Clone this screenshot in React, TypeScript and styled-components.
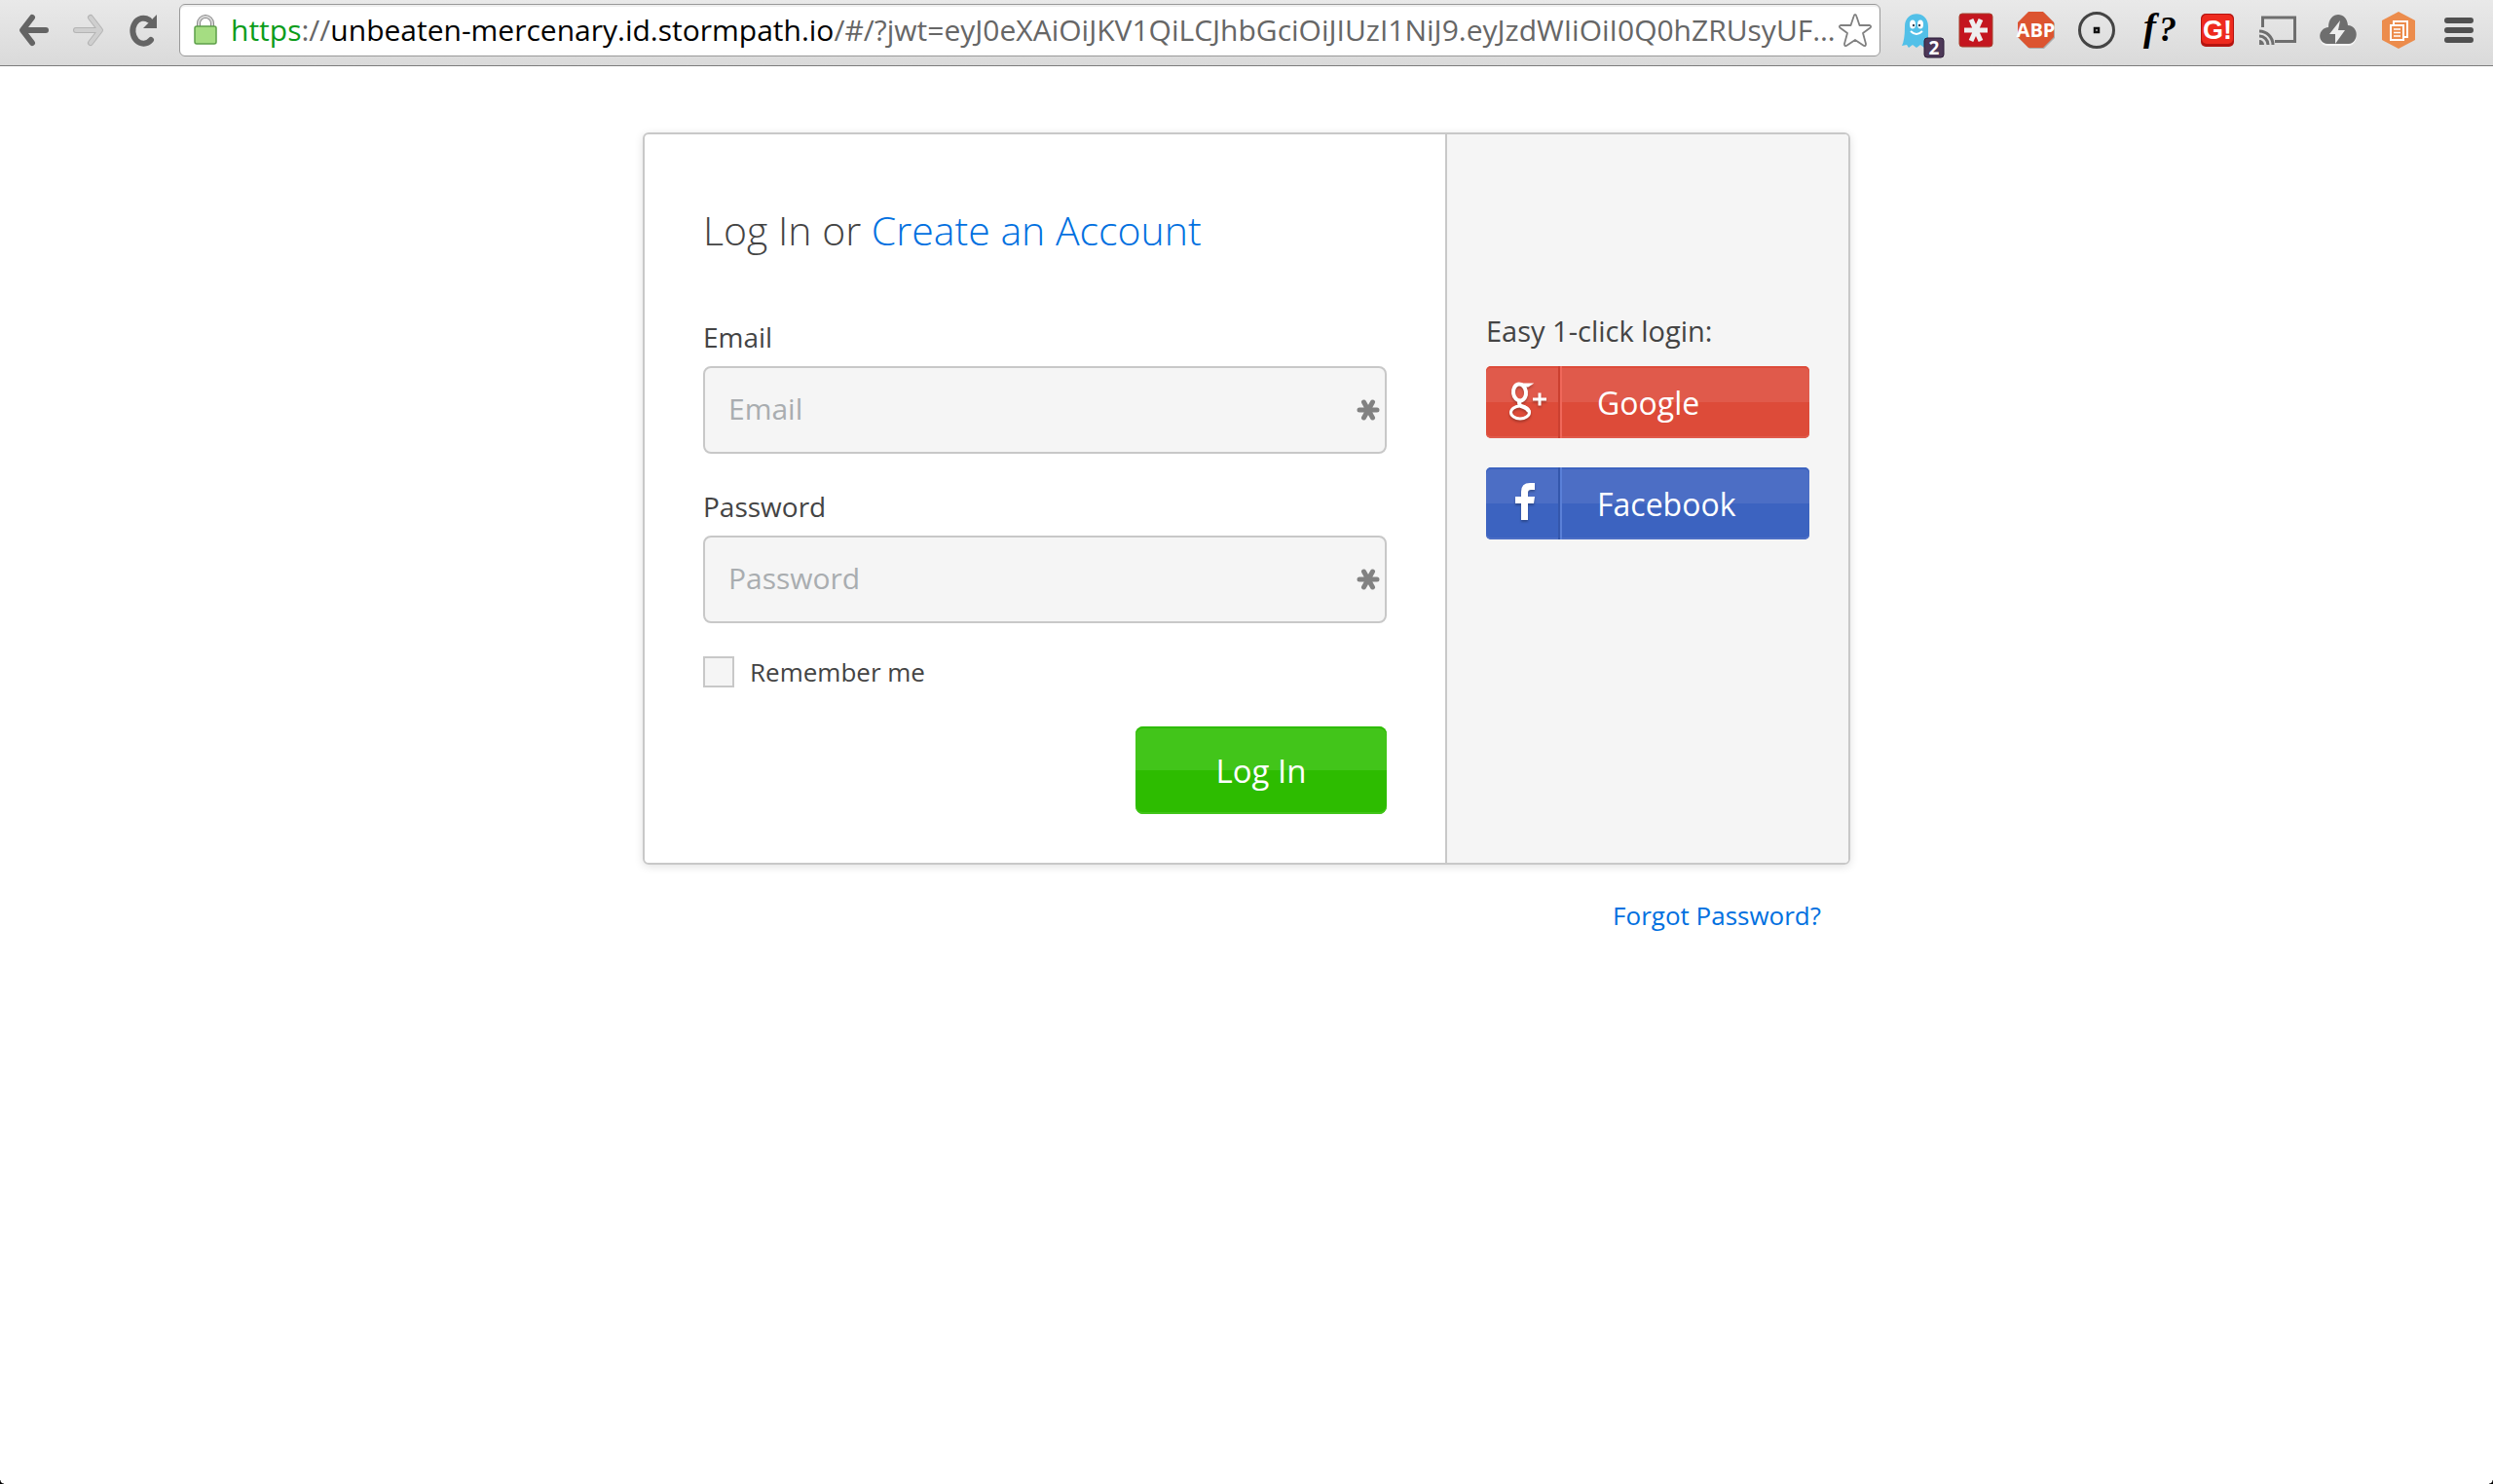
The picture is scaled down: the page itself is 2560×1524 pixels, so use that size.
import React from "react";
import styled, { createGlobalStyle } from "styled-components";

const sans = '"Open Sans", "Noto Sans", sans-serif';

const Global = createGlobalStyle`
  * { box-sizing: border-box; }
  body { margin: 0; background: #fff; color: #444; font-family: ${sans}; }
  button, input { font-family: inherit; }
`;

const Toolbar = styled.header`
  display: flex;
  align-items: center;
  height: 68px;
  padding: 0 16px 5px;
  background: linear-gradient(#e9e9e9, #dadada);
  border-bottom: 1px solid #7c7c7c;
`;

const Group = styled.div<{ $gap: number }>`
  display: flex;
  align-items: center;
  gap: ${(p) => p.$gap}px;
  flex: none;
`;

const IconButton = styled.button`
  display: flex;
  align-items: center;
  justify-content: center;
  width: 38px;
  height: 60px;
  padding: 0;
  border: 0;
  background: none;
  svg { display: block; overflow: visible; flex: none; }
`;

const Omnibox = styled.div`
  display: flex;
  align-items: center;
  flex: 1;
  min-width: 0;
  height: 54px;
  margin: 0 17px 0 18px;
  padding: 0 7px 0 14px;
  background: #fff;
  border: 1px solid #999;
  border-radius: 6px;
  box-shadow: inset 0 2px 1px #eee;
  svg { flex: none; }
`;

const Address = styled.div`
  flex: 1;
  min-width: 0;
  padding-left: 14px;
  overflow: hidden;
  white-space: nowrap;
  font-size: 30px;
  line-height: 44px;
  color: #666;
`;

const Scheme = styled.span`color: #0b9c1a;`;
const Host = styled.span`color: #000;`;

const Main = styled.main`
  width: 1240px;
  max-width: 100%;
  margin: 68px auto 0;
`;

const Card = styled.section`
  display: flex;
  border: 2px solid #c8c8c8;
  border-radius: 6px;
  overflow: hidden;
  box-shadow: 0 2px 10px rgba(0, 0, 0, 0.12);
`;

const LoginForm = styled.form`
  flex: 1;
  padding: 70px 60px 50px;
`;

const Title = styled.h1`
  margin: 0 0 62px;
  font-size: 41px;
  line-height: 56px;
  font-weight: 300;
`;

const Link = styled.a`
  color: #0070e0;
  text-decoration: none;
`;

const Field = styled.div`
  margin-bottom: 34px;
`;

const Label = styled.label`
  display: block;
  padding-bottom: 10px;
  font-size: 28px;
  line-height: 40px;
`;

const InputBox = styled.div`
  display: flex;
  align-items: center;
  height: 90px;
  padding-right: 5px;
  background: #f5f5f5;
  border: 2px solid #c8c8c8;
  border-radius: 8px;
  svg { flex: none; }
`;

const TextInput = styled.input`
  flex: 1;
  min-width: 0;
  height: 100%;
  padding: 0 24px 3px;
  border: 0;
  outline: 0;
  background: none;
  font-size: 30px;
  color: #444;
  &::placeholder { color: #a9adb0; opacity: 1; }
`;

const Remember = styled.label`
  display: flex;
  align-items: center;
  gap: 16px;
  font-size: 26px;
  line-height: 32px;
`;

const Checkbox = styled.input`
  appearance: none;
  width: 32px;
  height: 32px;
  margin: 0;
  background: #f5f5f5;
  border: 2px solid #c8c8c8;
`;

const glossy = (top: string, bottom: string) => `
  background: linear-gradient(${top} 50%, ${bottom} 50%);
  box-shadow: inset 0 2px ${bottom}, inset 0 -2px ${top};
  color: #fff;
  border: 0;
  font-weight: 500;
`;

const Submit = styled.button`
  display: block;
  width: 258px;
  height: 90px;
  margin: 40px 0 0 auto;
  border-radius: 8px;
  font-size: 33px;
  ${glossy("#42c51a", "#2dbc00")}
`;

const Social = styled.aside`
  flex: none;
  width: 414px;
  padding: 180px 40px 0;
  background: #f5f5f5;
  border-left: 2px solid #c8c8c8;
`;

const SocialLabel = styled.p`
  margin: 0 0 14px;
  font-size: 29px;
  line-height: 44px;
`;

const SocialButton = styled.button<{ $top: string; $bottom: string; $dark: string; $light: string }>`
  display: flex;
  align-items: center;
  width: 100%;
  height: 74px;
  margin-bottom: 30px;
  padding: 0;
  border-radius: 5px;
  font-size: 32px;
  ${(p) => glossy(p.$top, p.$bottom)}
  svg {
    display: block;
    width: 74px;
    height: 74px;
    filter: drop-shadow(0 2px 1px rgba(0, 0, 0, 0.25));
  }
  span {
    align-self: stretch;
    padding-left: 36px;
    line-height: 76px;
    border-left: 2px solid ${(p) => p.$light};
    box-shadow: -2px 0 ${(p) => p.$dark};
    margin-left: 2px;
  }
`;

const Below = styled.div`
  padding: 34px 30px 0;
  text-align: right;
  font-size: 26px;
  line-height: 36px;
`;

const WindowCorner = styled.div<{ $side: "left" | "right" }>`
  position: fixed;
  bottom: 0;
  ${(p) => p.$side}: 0;
  width: 4px;
  height: 4px;
  background: radial-gradient(circle at ${(p) => (p.$side === "left" ? "right" : "left")} top, transparent 3px, #000 4px);
`;

const Asterisk = () => (
  <svg width="24" height="24" viewBox="0 0 24 24" stroke="#828282" strokeWidth="5" strokeLinecap="round" aria-hidden="true">
    <path d="M3 12H21M7.500 4L16.500 20M16.500 4L7.500 20" />
  </svg>
);

const Back = () => (
  <svg width="32" height="34" viewBox="0 0 32 34" fill="none" stroke="#646464" strokeWidth="6" strokeLinecap="round" strokeLinejoin="round">
    <path d="M28 17H6M14 4L4 17L14 30" />
  </svg>
);

const Forward = () => (
  <svg width="32" height="34" viewBox="0 0 32 34" fill="none" strokeLinecap="round" strokeLinejoin="round">
    <path d="M3 17H26M18 4L28 17L18 30" stroke="#b4b4b4" strokeWidth="6" />
    <path d="M3 17H26M18 4L28 17L18 30" stroke="#cfcfcf" strokeWidth="4" />
  </svg>
);

const Reload = () => (
  <svg width="28" height="34" viewBox="0 0 28 34" fill="none">
    <path d="M22 27A11 13 0 1 1 20 6.500" stroke="#646464" strokeWidth="6" strokeLinecap="round" />
    <path d="M28 1V15H14Z" fill="#646464" />
  </svg>
);

const Lock = () => (
  <svg width="24" height="32" viewBox="0 0 24 32">
    <path d="M5 14V9a7 7 0 0 1 14 0v5" fill="none" stroke="#8a8a8a" strokeWidth="4" />
    <path d="M5 14V9a7 7 0 0 1 14 0v5" fill="none" stroke="#d8d8d8" strokeWidth="2" />
    <rect x="1" y="12" width="22" height="18" rx="2" fill="#a5dd82" stroke="#5ea04a" strokeWidth="1.500" />
  </svg>
);

const Star = () => (
  <svg width="36" height="36" viewBox="0 0 36 36" fill="#fff" stroke="#808080" strokeWidth="1.800" strokeLinejoin="round">
    <path d="M18 2Q19 2 19.500 4L22.500 13H33Q35 14 33.500 15.500L26 21L29 32Q29 34.500 27 34L18 28L9 34Q7 34.500 7 32L10 21L2.500 15.500Q1 14 3 13H13.500L16.500 4Q17 2 18 2Z" />
  </svg>
);

const Ghost = () => (
  <svg width="28" height="34" viewBox="0 0 28 34">
    <path d="M3 13C3 -4 27 -4 27 13V31L23 35L19 32L15 35L11 32L7 35L5 32L0 33Q3 27 3 13Z" fill="#52c0e8" />
    <ellipse cx="11" cy="11" rx="3" ry="4.500" fill="#fff" /><ellipse cx="19" cy="11" rx="3" ry="4.500" fill="#fff" />
    <circle cx="12" cy="12" r="1.200" fill="#345" /><circle cx="18" cy="12" r="1.200" fill="#345" />
    <path d="M9 18Q15 24 21 18" fill="none" stroke="#fff" strokeWidth="2" />
    <rect x="23" y="25" width="20" height="20" rx="3" fill="#4d3858" stroke="#2b1a36" />
    <text x="33" y="42" fill="#fff" fontSize="19" fontWeight="700" textAnchor="middle" fontFamily="Open Sans">2</text>
  </svg>
);

const Pass = () => (
  <svg width="36" height="36" viewBox="0 0 36 36">
    <rect x="1" y="1" width="34" height="34" rx="3" fill="#c4161f" stroke="#a4402c" />
    <path d="M6 18H30M13 7L23 29M23 7L13 29" stroke="#eee" strokeWidth="5" />
  </svg>
);

const Abp = () => (
  <svg width="38" height="38" viewBox="0 0 38 38">
    <path d="M12 1H27L38 12V27L27 38H12L1 27V12Z" fill="#aaa" />
    <path d="M11 0H26L37 11V26L26 37H11L0 26V11Z" fill="#dc5430" />
    <text x="18.500" y="26" fill="#fff" fontSize="20" fontWeight="700" textAnchor="middle" fontFamily="Liberation Sans Narrow, Open Sans">ABP</text>
  </svg>
);

const Target = () => (
  <svg width="38" height="38" viewBox="0 0 38 38" fill="none">
    <circle cx="19" cy="19" r="17.500" stroke="#444" strokeWidth="3" />
    <rect x="17" y="17" width="4" height="4" stroke="#111" strokeWidth="2.500" />
  </svg>
);

const FQuestion = () => (
  <svg width="38" height="38" viewBox="0 0 38 38">
    <text x="5" y="29" fontSize="39" fontWeight="700" fontStyle="italic" fontFamily="Liberation Serif">f</text>
    <text x="21" y="30" fontSize="36" fontWeight="700" fontStyle="italic" fontFamily="Liberation Serif">?</text>
  </svg>
);

const GBang = () => (
  <svg width="34" height="34" viewBox="0 0 34 34">
    <rect width="34" height="34" rx="5" fill="#b51410" />
    <rect x="1" y="1" width="32" height="30" rx="5" fill="#ee2a1e" />
    <text x="17" y="26" fill="#fff" fontSize="27" fontWeight="700" textAnchor="middle" fontFamily="Liberation Sans">G!</text>
  </svg>
);

const Cast = () => (
  <svg width="38" height="30" viewBox="0 0 38 30" fill="none" stroke="#6e6e6e" strokeWidth="3">
    <path d="M3.500 12V2H36.500V26.500H16" />
    <path d="M0 16A14 14 0 0 1 14 30M0 21A9 9 0 0 1 9 30" />
    <path d="M0 25A5 5 0 0 1 5 30H0Z" fill="#6e6e6e" stroke="none" />
  </svg>
);

const Cloud = () => (
  <svg width="38" height="32" viewBox="0 0 38 32">
    <path d="M8 32C-3 31 -2 16 9 15C9 -3 28 -3 29 13C41 14 40 31 30 32Z" fill="#f4f4f4" />
    <path d="M8 30C-3 29 -2 14 9 13C9 -4 28 -4 29 11C41 12 40 29 30 30Z" fill="#6e6e6e" />
    <path d="M21 6L10 20H16L16 30L26 16H19Z" fill="#eee" />
  </svg>
);

const Hex = () => (
  <svg width="34" height="38" viewBox="0 0 34 38">
    <path d="M17 0L34 9V29L17 38L0 29V9Z" fill="#ec8c4c" />
    <g fill="none" stroke="#fff" strokeWidth="2"><path d="M12 13V10H26V26H22" /><rect x="9" y="14" width="13" height="15" /><path d="M12 18H19M12 21.500H19M12 25H19" strokeWidth="1.500" /></g>
  </svg>
);

const Menu = () => (
  <svg width="30" height="28" viewBox="0 0 30 28" stroke="#505050" strokeWidth="6" strokeLinecap="round">
    <path d="M3 4H27M3 14H27M3 24H27" />
  </svg>
);

const GooglePlus = () => (
  <svg viewBox="0 0 74 74" fill="none" stroke="#fff" aria-hidden="true">
    <ellipse cx="34.500" cy="27" rx="6.500" ry="8.500" strokeWidth="4" transform="rotate(-8 34.500 27)" />
    <path d="M35 18.500H46L43 20.500H38" strokeWidth="2" />
    <path d="M36 35Q32 38 36 41Q43 43 44 47" strokeWidth="4" />
    <ellipse cx="35" cy="47.500" rx="9.500" ry="6.500" strokeWidth="3" />
    <path d="M48 34H62M55 27.500V40.500" strokeWidth="3" />
  </svg>
);

const FacebookF = () => (
  <svg viewBox="0 0 74 74" fill="#fff" aria-hidden="true">
    <path d="M36 54V37H30V30H36V25Q36 16 45 16H50V23H46Q43 23 43 26V30H50L49 37H43V54Z" />
  </svg>
);

const extensions: [string, React.FC][] = [
  ["Ghostery", Ghost], ["Password manager", Pass], ["Adblock Plus", Abp],
  ["Target", Target], ["Font finder", FQuestion], ["G!", GBang], ["Cast", Cast],
  ["Cloud", Cloud], ["Copy", Hex], ["Menu", Menu],
];

export default function App() {
  return (
    <>
      <Global />
      <Toolbar>
        <Group $gap={18}>
          <IconButton aria-label="Back"><Back /></IconButton>
          <IconButton aria-label="Forward"><Forward /></IconButton>
          <IconButton aria-label="Reload"><Reload /></IconButton>
        </Group>
        <Omnibox>
          <Lock />
          <Address role="textbox" aria-label="Address" tabIndex={0}>
            <Scheme>https</Scheme>://<Host>unbeaten-mercenary.id.stormpath.io</Host>/#/?jwt=eyJ0eXAiOiJKV1QiLCJhbGciOiJIUzI1NiJ9.eyJzdWIiOiI0Q0hZRUsyUF…
          </Address>
          <Star />
        </Omnibox>
        <Group $gap={24}>
          {extensions.map(([name, Icon]) => (
            <IconButton key={name} aria-label={name}><Icon /></IconButton>
          ))}
        </Group>
      </Toolbar>
      <Main>
        <Card>
          <LoginForm onSubmit={(e) => e.preventDefault()}>
            <Title>Log In or <Link href="#create">Create an Account</Link></Title>
            <Field>
              <Label htmlFor="email">Email</Label>
              <InputBox><TextInput id="email" type="email" placeholder="Email" /><Asterisk /></InputBox>
            </Field>
            <Field>
              <Label htmlFor="password">Password</Label>
              <InputBox><TextInput id="password" type="password" placeholder="Password" /><Asterisk /></InputBox>
            </Field>
            <Remember><Checkbox type="checkbox" />Remember me</Remember>
            <Submit type="submit">Log In</Submit>
          </LoginForm>
          <Social>
            <SocialLabel>Easy 1-click login:</SocialLabel>
            <SocialButton type="button" $top="#e05a4b" $bottom="#dd4b39" $dark="#cb4030" $light="#f0685a">
              <GooglePlus /><span>Google</span>
            </SocialButton>
            <SocialButton type="button" $top="#4c6ec5" $bottom="#3c63c0" $dark="#3457ac" $light="#5a80d8">
              <FacebookF /><span>Facebook</span>
            </SocialButton>
          </Social>
        </Card>
        <Below><Link href="#forgot">Forgot Password?</Link></Below>
      </Main>
      <WindowCorner $side="left" />
      <WindowCorner $side="right" />
    </>
  );
}
